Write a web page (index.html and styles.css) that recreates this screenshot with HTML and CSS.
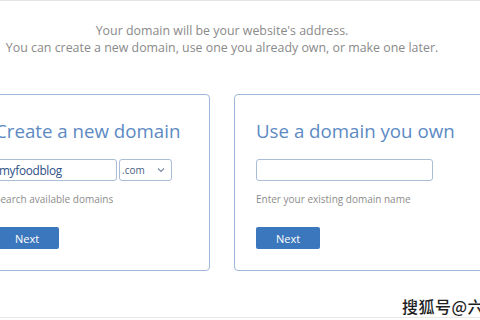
FILE: index.html
```html
<!DOCTYPE html>
<html lang="en">
<head>
    <meta charset="UTF-8">
    <meta name="viewport" content="width=device-width, initial-scale=1.0">
    <title>Choose a domain</title>
    <link rel="stylesheet" href="styles.css">
</head>
<body>

<p class="intro">
    Your domain will be your website's address.<br>
    You can create a new domain, use one you already own, or make one later.
</p>

<div class="cards">
    <form class="card first" id="newDomain">
        <h2>Create a new domain</h2>
        <div class="field-row">
            <input type="text" class="domain-input short" value="myfoodblog">
            <div class="tld">
                <span>.com</span>
                <svg width="8" height="6" viewBox="0 0 8 6"><path d="M1 1.5 L4 4.5 L7 1.5" fill="none" stroke="#7a8aa6" stroke-width="1.2"/></svg>
            </div>
        </div>
        <p class="hint">Search available domains</p>
        <button type="submit">Next</button>
    </form>

    <form class="card wide" id="ownDomain">
        <h2>Use a domain you own</h2>
        <div class="field-row">
            <input type="text" class="domain-input">
        </div>
        <p class="hint">Enter your existing domain name</p>
        <button type="submit">Next</button>
    </form>
</div>

<div class="watermark">搜狐号@六</div>

</body>
</html>
```

FILE: styles.css
```css
body {
    margin: 0;
    width: 480px;
    height: 320px;
    overflow: hidden;
    background: #fff;
    font-family: "Open Sans", Arial, sans-serif;
    border-top: 1px solid #e4e4e4;
    box-sizing: border-box;
    position: relative;
}
.intro {
    width: 494px;
    margin: 21px 0 0 -25px;
    text-align: center;
    font-size: 12.4px;
    line-height: 17px;
    color: #8a8a8a;
}
.cards {
    display: flex;
    gap: 24px;
    margin: 38px 0 0 -25px;
}
.card {
    flex: none;
    width: 235px;
    min-width: 0;
    height: 177px;
    box-sizing: border-box;
    border: 1px solid #9fb7d8;
    border-radius: 4px;
    padding: 22px 21px 0;
}
.card.first {
    padding-left: 19px;
}
.card.wide {
    width: 270px;
}
.card h2 {
    margin: 0;
    font-weight: normal;
    font-size: 18.7px;
    line-height: 27px;
    white-space: nowrap;
    color: #5d8ac4;
}
.field-row {
    display: flex;
    gap: 2px;
    margin-top: 15px;
}
.domain-input {
    width: 177px;
    height: 22px;
    box-sizing: border-box;
    border: 1px solid #a9bcd8;
    border-radius: 3px;
    padding: 0 3px;
    font-family: "Open Sans", Arial, sans-serif;
    font-size: 11.8px;
    letter-spacing: -0.3px;
    color: #2c4f86;
    outline: none;
}
.domain-input.short {
    width: 122px;
}
.tld {
    width: 53px;
    height: 22px;
    box-sizing: border-box;
    border: 1px solid #a9bcd8;
    border-radius: 3px;
    display: flex;
    align-items: center;
    justify-content: space-between;
    padding: 0 6px 0 2px;
    font-size: 10px;
    color: #4a5d7c;
}
.hint {
    margin: 10px 0 0;
    font-size: 10px;
    line-height: 16px;
    color: #8c8c8c;
}
button {
    margin-top: 20px;
    width: 64px;
    height: 22px;
    border: none;
    border-radius: 2px;
    background-color: #3b77bd;
    color: #fff;
    font-family: "Open Sans", Arial, sans-serif;
    font-size: 11px;
    padding: 0;
}
.watermark {
    position: absolute;
    right: -4px;
    top: 293px;
    font-family: "Noto Sans CJK SC", sans-serif;
    font-size: 16px;
    font-weight: 500;
    color: #1e1e1e;
    letter-spacing: 0.5px;
    text-shadow: 0 0 2px #fff;
}
body::after {
    content: "";
    position: absolute;
    left: 0;
    right: 0;
    bottom: 2px;
    border-bottom: 1px solid #e8e8e8;
}
```
